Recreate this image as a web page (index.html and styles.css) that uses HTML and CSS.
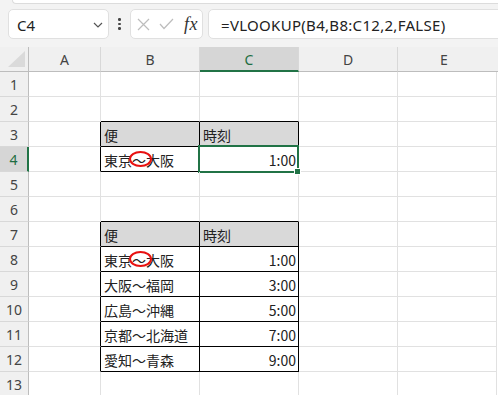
FILE: index.html
```html
<!DOCTYPE html>
<html lang="ja">
<head>
<meta charset="utf-8">
<title>VLOOKUP</title>
<link rel="stylesheet" href="styles.css">
</head>
<body>
<div class="app">
  <div class="ribbon-edge"></div>
  <div class="fbar">
    <div class="namebox">
      <span class="ref">C4</span>
      <svg class="chev" width="10" height="6" viewBox="0 0 10 6"><polyline points="1,1 5,5 9,1" fill="none" stroke="#555" stroke-width="1.2"/></svg>
    </div>
    <div class="dots"><i></i><i></i><i></i></div>
    <div class="fxbox">
      <svg width="13" height="13" viewBox="0 0 13 13"><path d="M1 1 L12 12 M12 1 L1 12" stroke="#bdbdbd" stroke-width="1.2" fill="none"/></svg>
      <svg width="15" height="12" viewBox="0 0 15 12"><polyline points="1,6 5,10.5 14,1" fill="none" stroke="#bdbdbd" stroke-width="1.2"/></svg>
      <span class="fx">fx</span>
    </div>
    <div class="formula">=VLOOKUP(B4,B8:C12,2,FALSE)</div>
  </div>
  <div class="sheet">
    <div class="corner"><span class="tri"></span></div>
    <div class="ch">A</div>
    <div class="ch">B</div>
    <div class="ch sel">C</div>
    <div class="ch">D</div>
    <div class="ch">E</div>

    <div class="rh">1</div><div class="c"></div><div class="c"></div><div class="c"></div><div class="c"></div><div class="c"></div>
    <div class="rh">2</div><div class="c"></div><div class="c tt"></div><div class="c tt"></div><div class="c"></div><div class="c"></div>
    <div class="rh">3</div><div class="c tl"></div><div class="c tb hd">便</div><div class="c tb hd">時刻</div><div class="c"></div><div class="c"></div>
    <div class="rh sel">4</div><div class="c tl"></div><div class="c tb">東京〜大阪<span class="ring"></span></div><div class="c tb num active">1:00<span class="handle"></span></div><div class="c"></div><div class="c"></div>
    <div class="rh">5</div><div class="c"></div><div class="c"></div><div class="c"></div><div class="c"></div><div class="c"></div>
    <div class="rh">6</div><div class="c"></div><div class="c tt"></div><div class="c tt"></div><div class="c"></div><div class="c"></div>
    <div class="rh">7</div><div class="c tl"></div><div class="c tb hd">便</div><div class="c tb hd">時刻</div><div class="c"></div><div class="c"></div>
    <div class="rh">8</div><div class="c tl"></div><div class="c tb">東京〜大阪<span class="ring"></span></div><div class="c tb num">1:00</div><div class="c"></div><div class="c"></div>
    <div class="rh">9</div><div class="c tl"></div><div class="c tb">大阪～福岡</div><div class="c tb num">3:00</div><div class="c"></div><div class="c"></div>
    <div class="rh">10</div><div class="c tl"></div><div class="c tb">広島～沖縄</div><div class="c tb num">5:00</div><div class="c"></div><div class="c"></div>
    <div class="rh">11</div><div class="c tl"></div><div class="c tb">京都～北海道</div><div class="c tb num">7:00</div><div class="c"></div><div class="c"></div>
    <div class="rh">12</div><div class="c tl"></div><div class="c tb">愛知～青森</div><div class="c tb num">9:00</div><div class="c"></div><div class="c"></div>
    <div class="rh">13</div><div class="c"></div><div class="c"></div><div class="c"></div><div class="c"></div><div class="c"></div>
  </div>
</div>
</body>
</html>
```

FILE: styles.css
```css
* { box-sizing: border-box; }
html, body { margin: 0; padding: 0; }
body {
  width: 498px;
  height: 395px;
  overflow: hidden;
  background: #f3f3f3;
  font-family: "Noto Sans", "Noto Sans CJK JP", sans-serif;
}
.app { width: 498px; height: 395px; overflow: hidden; }

.ribbon-edge {
  height: 4px;
  margin-left: 12px;
  background: #ffffff;
  border-bottom: 1px solid #dcdcdc;
  border-left: 1px solid #dcdcdc;
  border-bottom-left-radius: 4px;
}

.fbar {
  display: flex;
  align-items: center;
  height: 30px;
  margin-top: 5px;
  margin-bottom: 8px;
  padding-left: 8px;
}
.namebox {
  width: 101px;
  height: 30px;
  background: #fff;
  border: 1px solid #e0e0e0;
  border-radius: 5px;
  display: flex;
  align-items: center;
  justify-content: space-between;
  padding: 0 5px 0 8px;
}
.ref { font-size: 15px; color: #222; padding-top: 2px; }
.chev { margin-top: 1px; }
.dots {
  width: 21px;
  display: flex;
  flex-direction: column;
  align-items: center;
  gap: 2px;
}
.dots i { display: block; width: 2.5px; height: 2.5px; background: #444; border-radius: 50%; }
.fxbox {
  width: 73px;
  height: 30px;
  background: #fff;
  border: 1px solid #e0e0e0;
  border-radius: 5px;
  display: flex;
  align-items: center;
  padding-left: 6px;
  gap: 9px;
}
.fx {
  font-family: "Liberation Serif", serif;
  font-style: italic;
  font-size: 18px;
  color: #333;
  margin-left: 1px;
  letter-spacing: 0.5px;
}
.formula {
  flex: 1;
  height: 30px;
  margin-left: 5px;
  margin-right: -8px;
  background: #fff;
  border: 1px solid #e0e0e0;
  border-radius: 5px;
  display: flex;
  align-items: center;
  padding-left: 12px;
  padding-top: 1px;
  font-size: 15px;
  letter-spacing: 0.3px;
  color: #222;
}

.sheet {
  display: grid;
  grid-template-columns: 29px 72px 99px 99px 99px 99px 10px;
  grid-template-rows: repeat(14, 25px);
  background: #fff;
  width: 510px;
}
.corner, .ch, .rh {
  background: #f0f0f0;
  color: #444;
  font-size: 14px;
  display: flex;
  align-items: center;
  justify-content: center;
  border-right: 1px solid #d8d8d8;
  border-bottom: 1px solid #d8d8d8;
}
.ch { border-bottom-color: #bdbdbd; padding-top: 1px; }
.ch:nth-child(6) { grid-column: 6 / span 2; justify-content: flex-start; padding-left: 42px; }
.rh { grid-column: 1; border-right-color: #bdbdbd; }
.corner { border-right-color: #bdbdbd; border-bottom-color: #bdbdbd; position: relative; }
.tri {
  position: absolute;
  left: 8px;
  top: 4px;
  width: 0; height: 0;
  border-left: 17px solid transparent;
  border-bottom: 16px solid #dadada;
}
.ch.sel {
  background: #d6d6d6;
  color: #1e6e42;
  border-bottom: 2px solid #217346;
}
.rh.sel {
  background: #d6d6d6;
  color: #1e6e42;
  border-right: 2px solid #217346;
}

.c {
  position: relative;
  border-right: 1px solid #e1e1e1;
  border-bottom: 1px solid #e1e1e1;
  font-family: "Noto Sans CJK JP", sans-serif;
  font-size: 14px;
  color: #222;
  display: flex;
  align-items: center;
  padding: 1px 0 0 3px;
  white-space: nowrap;
}
.sheet > .c:nth-child(6n+1) { grid-column: 6 / span 2; }
.tt { border-bottom-color: #000; }
.tl { border-right-color: #000; }
.tb { border-right-color: #000; border-bottom-color: #000; }
.hd { background: #d9d9d9; }
.num { justify-content: flex-end; padding: 1px 2px 0 0; }

.ring {
  position: absolute;
  left: 28px;
  top: 4px;
  width: 23px;
  height: 16px;
  border: 2px solid #e81010;
  border-radius: 50%;
}
.active::after {
  content: "";
  position: absolute;
  left: -2px;
  top: -2px;
  right: -1px;
  bottom: -2px;
  border: 2px solid #217346;
}
.handle {
  position: absolute;
  right: -3px;
  bottom: -4px;
  width: 7px;
  height: 7px;
  background: #217346;
  border: 1px solid #fff;
  z-index: 2;
}
```
